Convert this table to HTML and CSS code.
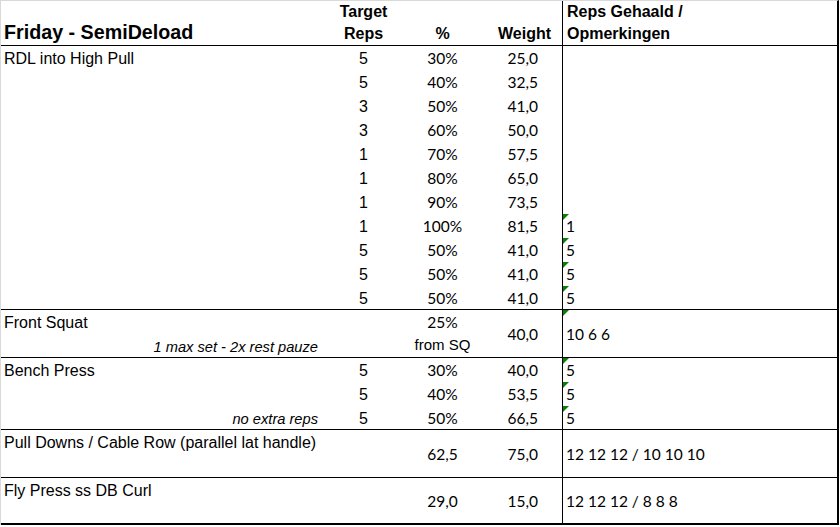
FILE: index.html
```html
<!DOCTYPE html>
<html lang="nl">
<head>
<meta charset="utf-8">
<title>Friday - SemiDeload</title>
<link rel="stylesheet" href="styles.css">
</head>
<body>
<div class="sheet">
  <div class="grid head">
    <div class="c"></div>
    <div class="c hb ctr">Target</div>
    <div class="c"></div>
    <div class="c"></div>
    <div class="c hb nh">Reps Gehaald /<br>Opmerkingen</div>
    <div class="c title">Friday - SemiDeload</div>
    <div class="c hb ctr">Reps</div>
    <div class="c hb ctr">%</div>
    <div class="c hb wh">Weight</div>
  </div>

  <div class="grid g11">
    <div class="c name">RDL into High Pull</div><div class="c ctr">5</div><div class="c pc">30%</div><div class="c wt">25,0</div><div class="c n"></div>
    <div class="c name"></div><div class="c ctr">5</div><div class="c pc">40%</div><div class="c wt">32,5</div><div class="c n"></div>
    <div class="c name"></div><div class="c ctr">3</div><div class="c pc">50%</div><div class="c wt">41,0</div><div class="c n"></div>
    <div class="c name"></div><div class="c ctr">3</div><div class="c pc">60%</div><div class="c wt">50,0</div><div class="c n"></div>
    <div class="c name"></div><div class="c ctr">1</div><div class="c pc">70%</div><div class="c wt">57,5</div><div class="c n"></div>
    <div class="c name"></div><div class="c ctr">1</div><div class="c pc">80%</div><div class="c wt">65,0</div><div class="c n"></div>
    <div class="c name"></div><div class="c ctr">1</div><div class="c pc">90%</div><div class="c wt">73,5</div><div class="c n"></div>
    <div class="c name"></div><div class="c ctr">1</div><div class="c pc">100%</div><div class="c wt">81,5</div><div class="c n flag">1</div>
    <div class="c name"></div><div class="c ctr">5</div><div class="c pc">50%</div><div class="c wt">41,0</div><div class="c n flag">5</div>
    <div class="c name"></div><div class="c ctr">5</div><div class="c pc">50%</div><div class="c wt">41,0</div><div class="c n flag">5</div>
    <div class="c name"></div><div class="c ctr">5</div><div class="c pc">50%</div><div class="c wt">41,0</div><div class="c n flag">5</div>
  </div>

  <div class="grid g2">
    <div class="c name">Front Squat</div>
    <div class="c"></div>
    <div class="c pc">25%</div>
    <div class="c wt span2">40,0</div>
    <div class="c n flag span2">10 6 6</div>
    <div class="c it">1 max set - 2x rest pauze</div>
    <div class="c"></div>
    <div class="c from">from SQ</div>
  </div>

  <div class="grid g3">
    <div class="c name">Bench Press</div><div class="c ctr">5</div><div class="c pc">30%</div><div class="c wt">40,0</div><div class="c n flag">5</div>
    <div class="c name"></div><div class="c ctr">5</div><div class="c pc">40%</div><div class="c wt">53,5</div><div class="c n flag">5</div>
    <div class="c it">no extra reps</div><div class="c ctr">5</div><div class="c pc">50%</div><div class="c wt">66,5</div><div class="c n flag">5</div>
  </div>

  <div class="grid g2">
    <div class="c name top2">Pull Downs / Cable Row (parallel lat handle)</div>
    <div class="c top2"></div>
    <div class="c pc span2">62,5</div>
    <div class="c wt span2">75,0</div>
    <div class="c n span2">12 12 12 / 10 10 10</div>
  </div>

  <div class="grid glast">
    <div class="c name top2">Fly Press ss DB Curl</div>
    <div class="c top2"></div>
    <div class="c pc span2">29,0</div>
    <div class="c wt span2">15,0</div>
    <div class="c n span2">12 12 12 / 8 8 8</div>
  </div>
</div>
</body>
</html>
```

FILE: styles.css
```css
* {
  box-sizing: border-box;
}

html,
body {
  margin: 0;
  background: #ffffff;
}

body {
  font-family: "Liberation Sans", Arial, sans-serif;
  color: #000000;
}

.sheet {
  width: 839px;
  border-top: 1px solid #d9d9d9;
  border-left: 1px solid #d9d9d9;
  border-right: 2px solid #000000;
}

.grid {
  display: grid;
  grid-template-columns: 321px 83px 75px 82px 275px;
}

.head {
  grid-template-rows: 22px 22px;
  border-bottom: 1px solid #000000;
}

.g11 {
  grid-template-rows: repeat(10, 24px) 23px;
  border-bottom: 1px solid #000000;
}

.g2 {
  grid-template-rows: 24px 23px;
  border-bottom: 1px solid #000000;
}

.g3 {
  grid-template-rows: 24px 24px 23px;
  border-bottom: 1px solid #000000;
}

.glast {
  grid-template-rows: 24px 21px;
  border-bottom: 2px solid #000000;
}

.c {
  font-size: 16px;
  line-height: 26px;
  white-space: nowrap;
  min-width: 0;
}

.head .c {
  line-height: 22px;
}

.hb {
  font-weight: bold;
}

.title {
  font-weight: bold;
  font-size: 19.7px;
  padding-left: 3px;
}

.head .title {
  line-height: 18.5px;
}

.nh {
  grid-row: span 2;
  border-left: 1px solid #000000;
  padding-left: 4px;
}

.wh {
  text-align: right;
  padding-right: 11px;
}

.ctr {
  text-align: center;
}

.name {
  padding-left: 3px;
}

.top2 {
  grid-row: span 2;
}

.pc {
  font-family: Lato, "Liberation Sans", sans-serif;
  font-size: 15.5px;
  line-height: 24px;
  text-align: center;
}

.wt {
  font-family: Lato, "Liberation Sans", sans-serif;
  font-size: 15.5px;
  line-height: 24px;
  text-align: right;
  padding-right: 24px;
}

.n {
  position: relative;
  border-left: 1px solid #000000;
  padding-left: 3px;
  font-family: Lato, "Liberation Sans", sans-serif;
  font-size: 15.5px;
  line-height: 24px;
}

.it {
  font-style: italic;
  font-size: 14.67px;
  line-height: 26px;
  text-align: right;
  padding-right: 4px;
}

.from {
  font-size: 15px;
  line-height: 22px;
  text-align: center;
}

.span2 {
  grid-row: span 2;
  display: grid;
  align-content: center;
}

.flag::before {
  content: "";
  position: absolute;
  top: 0;
  left: 0;
  border-top: 6px solid #0a7d0a;
  border-right: 6px solid transparent;
}
```
